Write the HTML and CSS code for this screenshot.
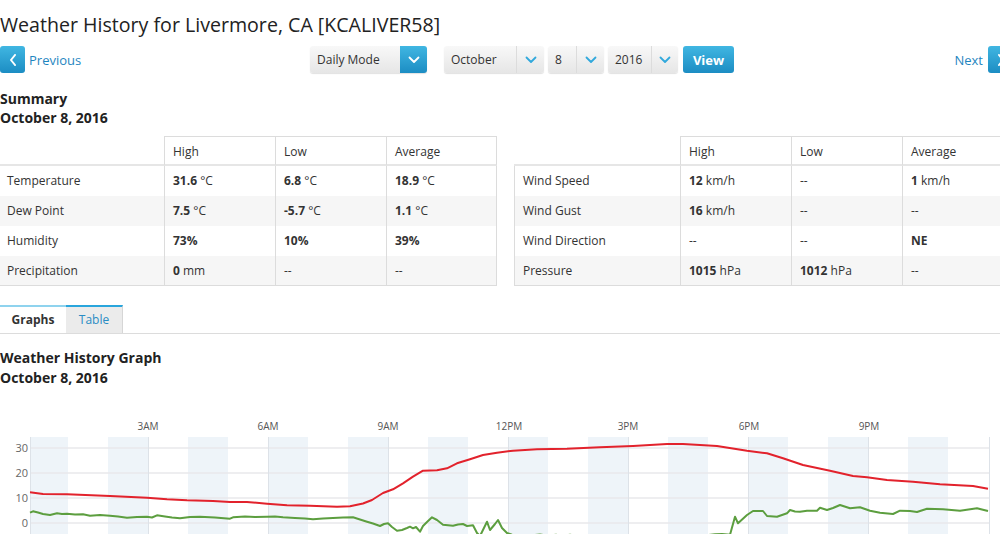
FILE: index.html
```html
<!DOCTYPE html>
<html lang="en">
<head>
<meta charset="utf-8">
<title>Weather History for Livermore, CA</title>
<link rel="stylesheet" href="styles.css">
</head>
<body>
<div class="page">
  <h1 class="title">Weather History for Livermore, CA [KCALIVER58]</h1>

  <div class="nav">
    <div class="nav-left">
      <a class="pager" href="#">
        <span class="pbtn"><svg width="8" height="12" viewBox="0 0 8 12"><polyline points="6,1 2,6 6,11" fill="none" stroke="#fff" stroke-width="2" stroke-linecap="round" stroke-linejoin="round"/></svg></span>
        <span class="plabel">Previous</span>
      </a>
    </div>
    <div class="controls">
      <div class="sel sel-mode">
        <span class="sel-text">Daily Mode</span>
        <span class="sel-arrow blue"><svg width="12" height="8" viewBox="0 0 12 8"><polyline points="1.5,1.5 6,6 10.5,1.5" fill="none" stroke="#fff" stroke-width="1.8" stroke-linecap="round" stroke-linejoin="round"/></svg></span>
      </div>
      <div class="sel sel-month">
        <span class="sel-text">October</span>
        <span class="sel-arrow"><svg width="12" height="8" viewBox="0 0 12 8"><polyline points="1.5,1.5 6,6 10.5,1.5" fill="none" stroke="#32a9dc" stroke-width="1.8" stroke-linecap="round" stroke-linejoin="round"/></svg></span>
      </div>
      <div class="sel sel-day">
        <span class="sel-text">8</span>
        <span class="sel-arrow"><svg width="12" height="8" viewBox="0 0 12 8"><polyline points="1.5,1.5 6,6 10.5,1.5" fill="none" stroke="#32a9dc" stroke-width="1.8" stroke-linecap="round" stroke-linejoin="round"/></svg></span>
      </div>
      <div class="sel sel-year">
        <span class="sel-text">2016</span>
        <span class="sel-arrow"><svg width="12" height="8" viewBox="0 0 12 8"><polyline points="1.5,1.5 6,6 10.5,1.5" fill="none" stroke="#32a9dc" stroke-width="1.8" stroke-linecap="round" stroke-linejoin="round"/></svg></span>
      </div>
      <button class="view" type="button">View</button>
    </div>
    <a class="pager next" href="#">
      <span class="plabel">Next</span>
      <span class="pbtn"><svg width="8" height="12" viewBox="0 0 8 12"><polyline points="2,1 6,6 2,11" fill="none" stroke="#fff" stroke-width="2" stroke-linecap="round" stroke-linejoin="round"/></svg></span>
    </a>
  </div>

  <h2 class="section-title summary-title">Summary<br>October 8, 2016</h2>

  <div class="tables">
    <table class="stats stats-left">
      <thead>
        <tr><th class="blank"></th><th>High</th><th>Low</th><th>Average</th></tr>
      </thead>
      <tbody>
        <tr><td>Temperature</td><td><b>31.6</b> °C</td><td><b>6.8</b> °C</td><td><b>18.9</b> °C</td></tr>
        <tr class="alt"><td>Dew Point</td><td><b>7.5</b> °C</td><td><b>-5.7</b> °C</td><td><b>1.1</b> °C</td></tr>
        <tr><td>Humidity</td><td><b>73%</b></td><td><b>10%</b></td><td><b>39%</b></td></tr>
        <tr class="alt"><td>Precipitation</td><td><b>0</b> mm</td><td>--</td><td>--</td></tr>
      </tbody>
    </table>
    <table class="stats stats-right">
      <thead>
        <tr><th class="blank"></th><th>High</th><th>Low</th><th>Average</th></tr>
      </thead>
      <tbody>
        <tr><td>Wind Speed</td><td><b>12</b> km/h</td><td>--</td><td><b>1</b> km/h</td></tr>
        <tr class="alt"><td>Wind Gust</td><td><b>16</b> km/h</td><td>--</td><td>--</td></tr>
        <tr><td>Wind Direction</td><td>--</td><td>--</td><td><b>NE</b></td></tr>
        <tr class="alt"><td>Pressure</td><td><b>1015</b> hPa</td><td><b>1012</b> hPa</td><td>--</td></tr>
      </tbody>
    </table>
  </div>

  <div class="tabs">
    <a class="tab tab-active" href="#">Graphs</a>
    <a class="tab tab-other" href="#">Table</a>
  </div>

  <h2 class="section-title graph-title">Weather History Graph<br>October 8, 2016</h2>

  <div class="chart">
    <svg width="1000" height="150" viewBox="0 0 1000 150">
      <g fill="#eef4f9">
        <rect x="30" y="37" width="38" height="113"/>
        <rect x="108" y="37" width="40" height="113"/>
        <rect x="188" y="37" width="40" height="113"/>
        <rect x="268" y="37" width="40" height="113"/>
        <rect x="348" y="37" width="40" height="113"/>
        <rect x="428" y="37" width="40" height="113"/>
        <rect x="508" y="37" width="40" height="113"/>
        <rect x="588" y="37" width="40" height="113"/>
        <rect x="668" y="37" width="40" height="113"/>
        <rect x="748" y="37" width="40" height="113"/>
        <rect x="828" y="37" width="40" height="113"/>
        <rect x="908" y="37" width="40" height="113"/>
      </g>
      <g stroke="#e8e9eb" stroke-width="1.5">
        <line x1="30" y1="48" x2="989" y2="48"/>
        <line x1="30" y1="73" x2="989" y2="73"/>
        <line x1="30" y1="98" x2="989" y2="98"/>
        <line x1="30" y1="123" x2="989" y2="123"/>
        <line x1="30" y1="148" x2="989" y2="148"/>
      </g>
      <g stroke="#dde2e8" stroke-width="1">
        <line x1="30.5" y1="37" x2="30.5" y2="150"/>
        <line x1="148.5" y1="37" x2="148.5" y2="150"/>
        <line x1="268.5" y1="37" x2="268.5" y2="150"/>
        <line x1="388.5" y1="37" x2="388.5" y2="150"/>
        <line x1="508.5" y1="37" x2="508.5" y2="150"/>
        <line x1="628.5" y1="37" x2="628.5" y2="150"/>
        <line x1="748.5" y1="37" x2="748.5" y2="150"/>
        <line x1="868.5" y1="37" x2="868.5" y2="150"/>
        <line x1="989.5" y1="37" x2="989.5" y2="150"/>
      </g>
      <g class="ylab" text-anchor="end">
        <text x="28" y="52">30</text>
        <text x="28" y="77">20</text>
        <text x="28" y="102">10</text>
        <text x="28" y="127">0</text>
      </g>
      <g class="xlab" text-anchor="middle">
        <text x="148" y="30">3AM</text>
        <text x="268" y="30">6AM</text>
        <text x="388" y="30">9AM</text>
        <text x="509" y="30">12PM</text>
        <text x="628" y="30">3PM</text>
        <text x="749" y="30">6PM</text>
        <text x="869" y="30">9PM</text>
      </g>
      <path fill="none" stroke="#e2222c" stroke-width="2" stroke-linejoin="round" d="M30,92.3 L43,94 L67,94.3 L110,96 L147,97.7 L167,99.3 L187,100.3 L213,101 L230,102 L247,102 L267,103.7 L287,105.3 L310,105.7 L337,106.7 L350,106.3 L363,103.5 L372,100 L383,93 L393,89.3 L403,83.3 L413,76.7 L423,70.7 L437,70.3 L447,68.3 L457,63.3 L470,59.3 L483,55 L497,52.7 L513,50.7 L537,49.3 L567,48.7 L600,47.3 L633,46 L667,44 L683,44 L717,46 L747,50.7 L767,53.3 L783,58.3 L803,65 L830,70.7 L853,76 L867,77.3 L887,80 L913,81.7 L940,84.3 L973,86 L988,88.7"/>
      <path fill="none" stroke="#5c9e3f" stroke-width="2" stroke-linejoin="round" d="M30,112.7 L33,111.3 L38,112.5 L43,114 L50,115 L57,113.3 L62,114 L67,113.7 L75,114.5 L83,114.3 L90,115.7 L100,115 L110,115.7 L118,116.5 L127,117.7 L137,117 L147,116.7 L152,117.5 L157,115.3 L165,116.5 L172,117.5 L180,118.3 L190,117 L200,116.7 L215,117.5 L230,118.7 L233,117.3 L245,116.5 L255,117 L267,116.7 L275,116.5 L283,117.3 L295,118 L305,118.5 L313,119.3 L323,118.5 L333,118 L343,117.5 L353,117.3 L360,119.5 L367,121.7 L373,123.5 L380,126 L384,124 L388,123.3 L392,127 L397,130.7 L402,130 L407,128 L410,126.7 L413,128.3 L416,127 L420,131.7 L423,126 L427,122 L432,117.3 L437,120 L443,124.7 L453,125.7 L458,124.5 L463,124 L467,126 L473,125.3 L477,133 L480,136 L487,121.7 L490,130 L495,124 L498,120 L502,128 L507,133 L512,134.8 L530,135.6 L540,134.6 L548,135.8 L556,134.8 L562,135.9 L570,134.8 L580,136.2 L600,135.8 L640,135.4 L660,134.9 L680,135.6 L700,135.9 L715,134.2 L722,134 L730,134.8 L735,116.7 L738,123.3 L747,115 L753,111 L763,111 L767,116 L777,116.7 L787,113.3 L790,110 L795,111.5 L800,111.7 L807,110.7 L817,110.7 L820,107.7 L827,110 L833,108 L840,105 L850,108.3 L860,107.3 L870,110.7 L880,112.7 L893,114 L900,110.7 L910,111 L917,112 L927,108.7 L943,109.3 L960,110.7 L977,108.3 L988,111"/>
    </svg>
  </div>
</div>
</body>
</html>
```

FILE: styles.css
```css
html, body {
  margin: 0;
  padding: 0;
  overflow: hidden;
  background: #fff;
}

body {
  font-family: "Open Sans", "Liberation Sans", sans-serif;
  color: #333;
}

.page {
  width: 1013px;
}

.title {
  margin: 12px 0 0;
  font-size: 19.6px;
  font-weight: 400;
  line-height: 26px;
  color: #222;
}

/* navigation row */
.nav {
  display: flex;
  align-items: center;
  height: 27px;
  margin-top: 8px;
}

.nav-left {
  flex: 0 0 310px;
}

.pager {
  display: flex;
  align-items: center;
  gap: 4px;
  color: #1f86bf;
  font-size: 13px;
  text-decoration: none;
}

.pager.next {
  margin-left: auto;
  gap: 5px;
}

.pbtn {
  width: 25px;
  height: 27px;
  border-radius: 3px;
  background: linear-gradient(#40b6e2, #1c8dc3);
  display: flex;
  align-items: center;
  justify-content: center;
}

.controls {
  display: flex;
  align-items: center;
}

.sel {
  display: flex;
  height: 27px;
  border-radius: 3px;
  background: linear-gradient(#f8f8f8, #e6e6e6);
  box-shadow: 0 1px 1px rgba(0, 0, 0, 0.12);
  font-size: 12px;
  color: #333;
  box-sizing: border-box;
}

.sel-text {
  flex: 1;
  padding-left: 7px;
  display: flex;
  align-items: center;
}

.sel-arrow {
  width: 27px;
  display: flex;
  align-items: center;
  justify-content: center;
  border-left: 1px solid #dcdcdc;
}

.sel-arrow.blue {
  border-left: 0;
  border-radius: 0 3px 3px 0;
  background: linear-gradient(#40b6e2, #1c8dc3);
}

.sel-mode { width: 117px; }
.sel-month { width: 100px; margin-left: 17px; }
.sel-day { width: 56px; margin-left: 4px; }
.sel-year { width: 70px; margin-left: 4px; }
.sel-year .sel-arrow { width: 26px; }

.view {
  width: 51px;
  height: 27px;
  margin-left: 5px;
  border: 0;
  border-radius: 3px;
  background: linear-gradient(#40b6e2, #1c8dc3);
  color: #fff;
  font-family: inherit;
  font-weight: 700;
  font-size: 13px;
  padding: 0;
}

/* headings */
.section-title {
  margin: 0;
  font-size: 14px;
  font-weight: 700;
  line-height: 19px;
  color: #222;
}

.summary-title {
  margin-top: 16px;
}

/* tables */
.tables {
  display: flex;
  gap: 17px;
  margin-top: 9px;
}

.stats {
  border-collapse: separate;
  border-spacing: 0;
  font-size: 12px;
  color: #333;
  table-layout: fixed;
}

.stats-left { width: 497px; }
.stats-right { width: 499px; }

.stats th,
.stats td {
  text-align: left;
  padding: 0 8px;
  white-space: nowrap;
}

.stats th {
  font-weight: 400;
  line-height: 25px;
  padding-top: 2px;
  border-top: 1px solid #dcdcdc;
  border-left: 1px solid #dcdcdc;
  border-bottom: 2px solid #e6e6e6;
}

.stats th.blank {
  border-top: 1px solid transparent;
  border-left: 0;
}

.stats-left th.blank { width: 164px; box-sizing: border-box; }
.stats-right th.blank { width: 166px; box-sizing: border-box; }

.stats th:last-child,
.stats td:last-child {
  border-right: 1px solid #dcdcdc;
}

.stats td {
  line-height: 30px;
  border-left: 1px solid #dcdcdc;
}

.stats-left td:first-child {
  border-left: 0;
  padding-left: 7px;
}

.stats tbody tr:last-child td {
  line-height: 29px;
  border-bottom: 1px solid #dcdcdc;
}

.stats tr.alt td {
  background: #f6f6f6;
}

.stats b {
  font-weight: 700;
}

/* tabs */
.tabs {
  display: flex;
  margin-top: 19px;
  border-bottom: 1px solid #dcdcdc;
}

.tab {
  display: block;
  height: 26px;
  line-height: 26px;
  font-size: 12px;
  text-align: center;
  text-decoration: none;
}

.tab-active {
  width: 66px;
  border-top: 2px solid #8fd3ee;
  font-weight: 700;
  color: #333;
  background: #fff;
}

.tab-other {
  width: 56px;
  border-top: 2px solid #29a5dc;
  border-right: 1px solid #d6d6d6;
  background: #ebebeb;
  color: #2a8cc4;
}

.graph-title {
  margin-top: 14px;
  line-height: 20px;
}

/* chart */
.chart {
  margin-top: 12px;
}

.chart svg {
  display: block;
}

.ylab text {
  font-family: "Open Sans", "Liberation Sans", sans-serif;
  font-size: 11px;
  fill: #666;
}

.xlab text {
  font-family: "Open Sans", "Liberation Sans", sans-serif;
  font-size: 10px;
  fill: #555;
}
```
